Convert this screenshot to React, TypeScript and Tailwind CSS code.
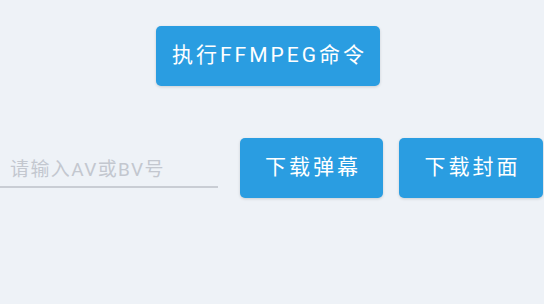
import React from "react";

const font = { fontFamily: "Roboto, 'Noto Sans CJK SC', sans-serif" };

export default function App() {
  return (
    <div
      className="w-[544px] h-[304px] bg-[#eef2f7] overflow-hidden flex flex-col"
      style={font}
    >
      <div className="pt-[26px] pl-[156px] flex">
        <button className="h-[60px] pl-[16px] pr-[13px] rounded-[5px] bg-[#2a9de1] text-white text-[21px] tracking-[3px] shadow-[0_1px_3px_rgba(0,0,0,0.15)]">
          执行FFMPEG命令
        </button>
      </div>
      <div className="mt-[52px] flex items-start">
        <input
          placeholder="请输入AV或BV号"
          className="mt-[14px] w-[218px] h-[36px] pl-[10px] bg-transparent border-b-2 border-[#c9cdd4] text-[19px] tracking-[1.4px] outline-none placeholder:text-[#c3c7cf]"
        />
        <button className="ml-[22px] w-[143px] h-[60px] pl-[3px] rounded-[5px] bg-[#2a9de1] text-white text-[21px] tracking-[3px] shadow-[0_1px_3px_rgba(0,0,0,0.15)]">
          下载弹幕
        </button>
        <button className="ml-[16px] w-[144px] h-[60px] pl-[3px] rounded-[5px] bg-[#2a9de1] text-white text-[21px] tracking-[3px] shadow-[0_1px_3px_rgba(0,0,0,0.15)]">
          下载封面
        </button>
      </div>
    </div>
  );
}
